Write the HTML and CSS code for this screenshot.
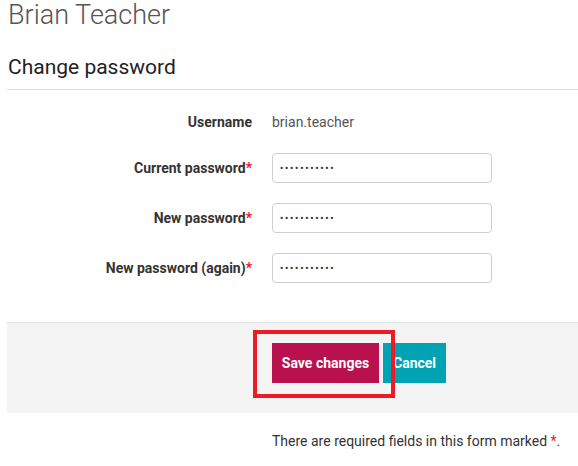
FILE: index.html
```html
<!DOCTYPE html>
<html>
<head>
<meta charset="utf-8">
<link rel="stylesheet" href="styles.css">
</head>
<body>
<div class="page">
  <h1 class="user-name">Brian Teacher</h1>
  <h2 class="section-title">Change password</h2>
  <form class="form">
    <div class="row row-static">
      <div class="label">Username</div>
      <div class="value">brian.teacher</div>
    </div>
    <div class="row">
      <label class="label">Current password<span class="req">*</span></label>
      <input class="field" type="password" value="xxxxxxxxxxx">
    </div>
    <div class="row">
      <label class="label">New password<span class="req">*</span></label>
      <input class="field" type="password" value="xxxxxxxxxxx">
    </div>
    <div class="row row-last">
      <label class="label">New password (again)<span class="req">*</span></label>
      <input class="field" type="password" value="xxxxxxxxxxx">
    </div>
    <div class="actions">
      <div class="spacer"></div>
      <div class="buttons">
        <button type="button" class="btn btn-save">Save changes</button>
        <button type="button" class="btn btn-cancel">Cancel</button>
        <div class="highlight"></div>
      </div>
    </div>
    <div class="note-row">
      <div class="spacer"></div>
      <p class="note">There are required fields in this form marked <span class="req">*</span>.</p>
    </div>
  </form>
</div>
</body>
</html>
```

FILE: styles.css
```css
* { box-sizing: border-box; }
html, body { margin: 0; padding: 0; background: #fff; }
body {
  font-family: Roboto, "Liberation Sans", Arial, sans-serif;
  color: #333;
}
.page {
  padding-left: 7px;
}
.user-name {
  margin: 0;
  padding-top: 0;
  padding-left: 1px;
  font-size: 27px;
  font-weight: 300;
  line-height: 30px;
  color: #555;
}
.section-title {
  margin: 25px 0 0 0;
  padding: 0 0 9px 1px;
  font-size: 21px;
  font-weight: 400;
  line-height: 25px;
  color: #222;
  border-bottom: 1px solid #dedede;
}
.form {
  margin: 0;
  padding-top: 17px;
}
.row {
  display: flex;
  align-items: center;
  height: 30px;
  margin-bottom: 20px;
}
.row-static { margin-bottom: 16px; }
.row-last { margin-bottom: 0; }
.label {
  width: 245px;
  flex: none;
  text-align: right;
  font-size: 14px;
  font-weight: 700;
  color: #333;
}
.req { color: #e9172b; }
.value {
  margin-left: 20px;
  font-size: 14px;
  color: #555;
}
.field {
  margin-left: 20px;
  width: 220px;
  height: 30px;
  border: 1px solid #cfcfcf;
  border-radius: 4px;
  padding: 0 7px;
  font-family: Roboto, sans-serif;
  font-size: 9px;
  font-weight: 700;
  letter-spacing: 1.8px;
  color: #333;
  background: #fff;
  outline: none;
}
.actions {
  display: flex;
  margin-top: 39px;
  height: 91px;
  background: #f4f4f4;
  border-top: 1px solid #e3e3e3;
  padding-top: 20px;
}
.spacer { width: 265px; flex: none; }
.buttons {
  position: relative;
  display: flex;
  gap: 4px;
  height: 40px;
}
.btn {
  border: 0;
  height: 40px;
  margin: 0;
  font-family: Roboto, sans-serif;
  font-size: 14px;
  font-weight: 700;
  color: #fff;
  cursor: pointer;
}
.btn-save {
  width: 107px;
  background: #b8114e;
  padding: 0;
}
.btn-cancel {
  width: 63px;
  background: #00a3b3;
  text-align: left;
  padding: 0 0 0 10px;
}
.highlight {
  position: absolute;
  left: -19px;
  top: -13px;
  width: 142px;
  height: 68px;
  border: 4.5px solid #ed1c24;
  pointer-events: none;
}
.note-row { display: flex; }
.note {
  margin: 20px 0 0 0;
  font-size: 14px;
  line-height: 16px;
  color: #333;
}
```
